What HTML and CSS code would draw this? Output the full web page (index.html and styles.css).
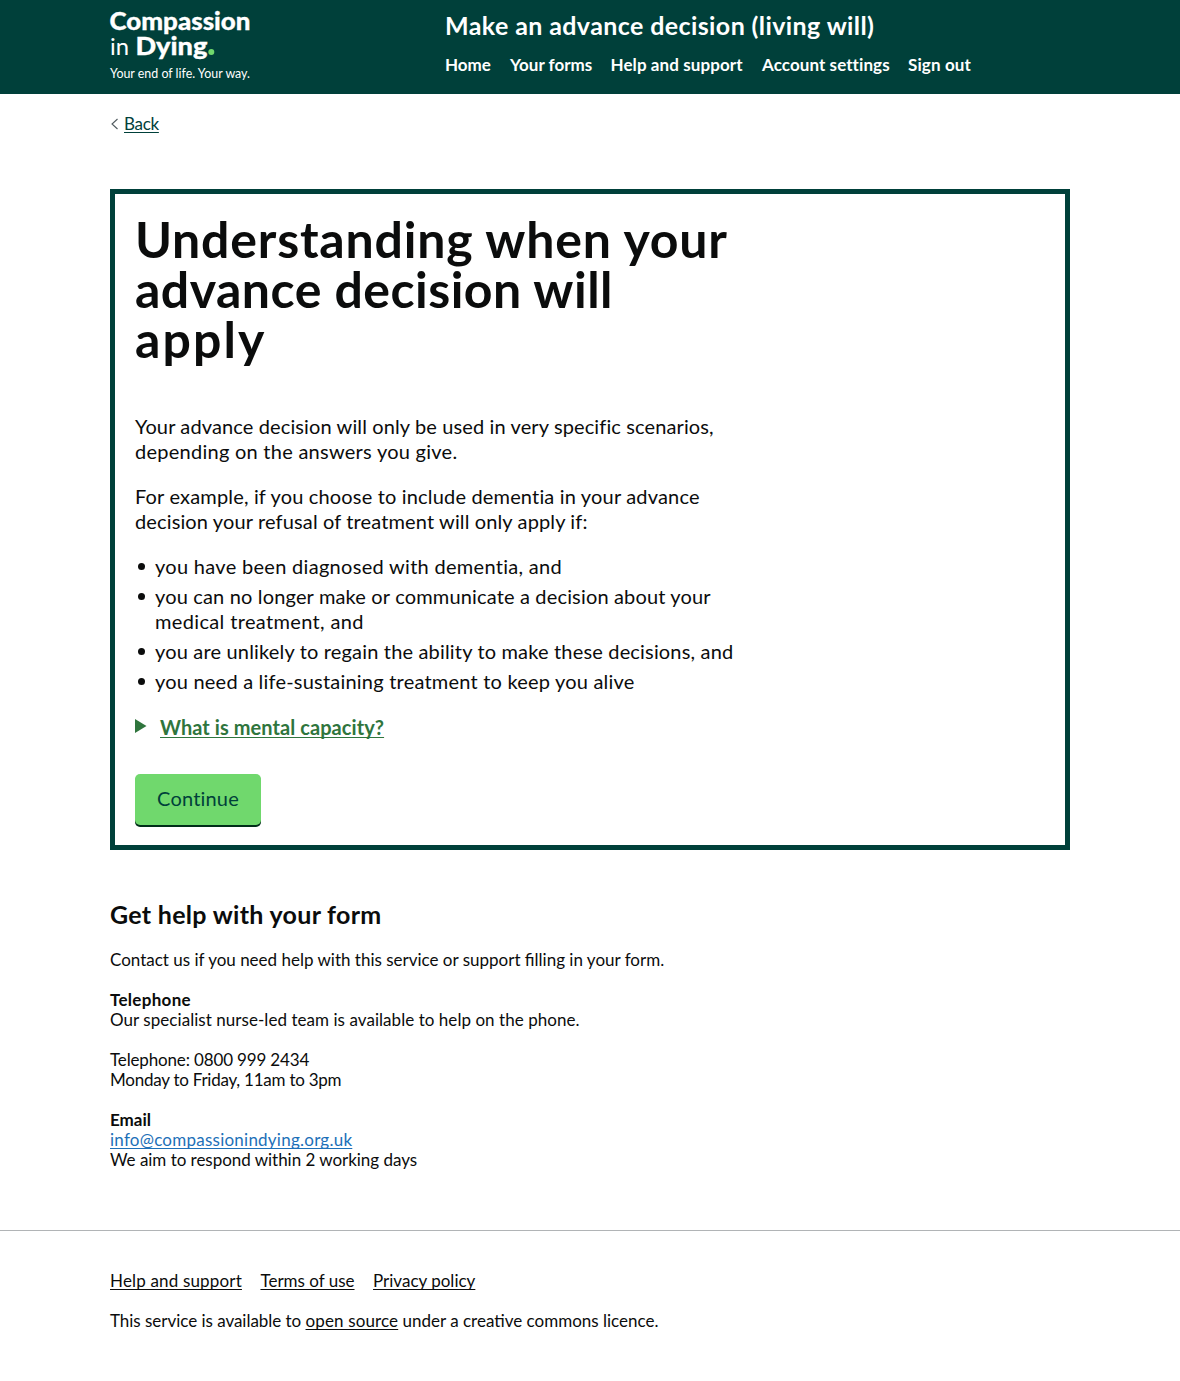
FILE: index.html
```
<!DOCTYPE html>
<html lang="en">
<head>
<meta charset="utf-8">
<title>Understanding when your advance decision will apply</title>
<link rel="stylesheet" href="styles.css">
</head>
<body>
<header class="header">
  <div class="container header-inner">
    <a class="logo" href="#" aria-label="Compassion in Dying">
      <svg width="142" height="84" viewBox="0 0 142 84">
        <g fill="#fff">
          <text class="logo-heavy" x="-0.5" y="29.5" textLength="141" lengthAdjust="spacingAndGlyphs">Compassion</text>
          <text class="logo-light" x="0" y="54.5" textLength="19" lengthAdjust="spacingAndGlyphs">in</text>
          <text class="logo-heavy" x="25.5" y="54.5" textLength="72" lengthAdjust="spacingAndGlyphs">Dying</text>
          <text class="logo-tagline" x="0" y="77.5" textLength="140" lengthAdjust="spacingAndGlyphs">Your end of life. Your way.</text>
        </g>
        <circle cx="101.3" cy="52" r="3" fill="#70d86d"/>
      </svg>
    </a>
    <div class="header-content">
      <div class="service-name">Make an advance decision (living will)</div>
      <nav class="nav">
        <a class="nav-home" href="#">Home</a>
        <a class="nav-forms" href="#">Your forms</a>
        <a class="nav-help" href="#">Help and support</a>
        <a class="nav-account" href="#">Account settings</a>
        <a class="nav-out" href="#">Sign out</a>
      </nav>
    </div>
  </div>
</header>
<div class="container">
  <div class="back">
    <svg width="9" height="12" viewBox="0 0 9 12"><path d="M7.500 1 2 6l5.500 5" fill="none" stroke="#505a5f" stroke-width="1.1"/></svg>
    <a class="tight-30" href="#">Back</a>
  </div>
  <main class="panel">
    <h1><span class="title-first">Understanding when your</span><br><span class="title-second">advance decision will</span><br><span class="title-third">apply</span></h1>
    <p><span class="track-12">Your advance decision will only be used in very specific scenarios,</span><br><span class="track-26">depending on the answers you give.</span></p>
    <p><span class="track-17">For example, if you choose to include dementia in your advance</span><br><span class="track-13">decision your refusal of treatment will only apply if:</span></p>
    <ul>
      <li class="track-30">you have been diagnosed with dementia, and</li>
      <li><span class="track-16">you can no longer make or communicate a decision about your</span><br><span class="track-35">medical treatment, and</span></li>
      <li class="track-17">you are unlikely to regain the ability to make these decisions, and</li>
      <li class="track-21">you need a life-sustaining treatment to keep you alive</li>
    </ul>
    <div class="summary">
      <svg width="12" height="14" viewBox="0 0 12 14"><path d="M0 0 11.500 7 0 14z" fill="#2f753d"/></svg>
      <a href="#">What is mental capacity?</a>
    </div>
    <button class="button" type="button">Continue</button>
  </main>
  <section class="help">
    <h2>Get help with your form</h2>
    <p>Contact us if you need help with this service or support filling in your form.</p>
    <p><strong class="track-30">Telephone</strong><br><span class="track-5">Our specialist nurse-led team is available to help on the phone.</span></p>
    <p><span class="tight-15">Telephone: 0800 999 2434</span><br><span class="tight-24">Monday to Friday, 11am to 3pm</span></p>
    <p><strong>Email</strong><br><a class="email track-24" href="#">info@compassionindying.org.uk</a><br><span class="tight-3">We aim to respond within 2 working days</span></p>
  </section>
</div>
<footer class="footer">
  <div class="container">
    <div class="footer-links">
      <a class="track-17" href="#">Help and support</a>
      <a href="#">Terms of use</a>
      <a href="#">Privacy policy</a>
    </div>
    <p><span class="tight-3">This service is available to </span><a class="track-13" href="#">open source</a><span> under a creative commons licence.</span></p>
  </div>
</footer>
</body>
</html>
```
FILE: styles.css
```
* { box-sizing: border-box; }
body { margin: 0; background: #fff; color: #0b0c0c; font: 17px/20px Lato, "Open Sans", sans-serif; }
h1, h2, p, ul { margin: 0; padding: 0; }
a { color: inherit; text-decoration: underline; text-decoration-thickness: 1px; text-underline-offset: 2px; text-decoration-skip-ink: none; }
svg { display: block; }
.container { width: 960px; margin: 0 auto; }

.header { height: 94px; background: #00403a; color: #fff; }
.header-inner { display: flex; }
.logo { width: 335px; }
.logo svg { overflow: visible; }
.logo-heavy { font: 900 25px Lato, sans-serif; stroke: #fff; stroke-width: .3px; }
.logo-light { font: 400 24px Lato, sans-serif; }
.logo-tagline { font: 400 12.5px Lato, sans-serif; }
.header-content { padding-top: 13px; }
.service-name { font-size: 25px; line-height: 25px; font-weight: 700; letter-spacing: .4px; }
.nav { display: flex; padding-top: 17px; font-weight: 700; }
.nav a { text-decoration: none; white-space: nowrap; }
.nav-home { width: 65px; }
.nav-forms { width: 100.5px; }
.nav-help { width: 151.5px; letter-spacing: .09px; }
.nav-account { width: 146px; letter-spacing: .08px; }
.nav-out { letter-spacing: .13px; }

.back { display: flex; align-items: center; gap: 5px; padding: 20px 0 55px; color: #00403a; }

.panel { height: 661px; padding: 20px; border: 5px solid #00403a; font-size: 20px; line-height: 25px; white-space: nowrap; }
h1 { margin-bottom: 50px; font-size: 50px; line-height: 50px; font-weight: 700; }
.title-first { letter-spacing: .8px; }
.title-second { letter-spacing: .48px; }
.title-third { letter-spacing: 2.1px; }
.panel p { margin-bottom: 20px; }
ul { list-style: none; margin-bottom: 20px; }
li { display: grid; position: relative; padding-left: 20px; margin-bottom: 5px; }
li br { display: none; }
li::before { content: ""; position: absolute; left: 3px; top: 9px; width: 7px; height: 7px; border-radius: 50%; background: #0b0c0c; }
.summary { display: flex; align-items: center; gap: 13px; color: #2f753d; font-weight: 700; letter-spacing: .07px; }
.summary svg { margin-top: -1px; }
.summary a { padding-top: 1px; margin-bottom: -1px; }
.button { display: block; width: 126px; height: 51px; margin-top: 35px; padding: 0 0 2px; border: 0; border-radius: 5px; background: #70d86d; box-shadow: 0 2px 0 #002d18; color: #00403a; font: 20px/25px Lato, sans-serif; letter-spacing: .2px; }

.help { padding: 52px 0 60px; }
h2 { margin-bottom: 23px; font-size: 25px; line-height: 25px; font-weight: 700; letter-spacing: .3px; }
.help p + p { margin-top: 20px; }
.email { color: #1d70b8; }

.footer { border-top: 1px solid #b1b4b6; padding: 40px 0 50px; }
.footer-links { display: flex; gap: 18.5px; margin-bottom: 20px; }

.tight-3 { letter-spacing: -.03px; }
.tight-15 { letter-spacing: -.15px; }
.tight-24 { letter-spacing: -.24px; }
.tight-30 { letter-spacing: -.3px; }
.track-5 { letter-spacing: .05px; }
.track-12 { letter-spacing: .12px; }
.track-13 { letter-spacing: .13px; }
.track-16 { letter-spacing: .16px; }
.track-17 { letter-spacing: .17px; }
.track-21 { letter-spacing: .21px; }
.track-24 { letter-spacing: .24px; }
.track-26 { letter-spacing: .26px; }
.track-30 { letter-spacing: .3px; }
.track-35 { letter-spacing: .35px; }
```
